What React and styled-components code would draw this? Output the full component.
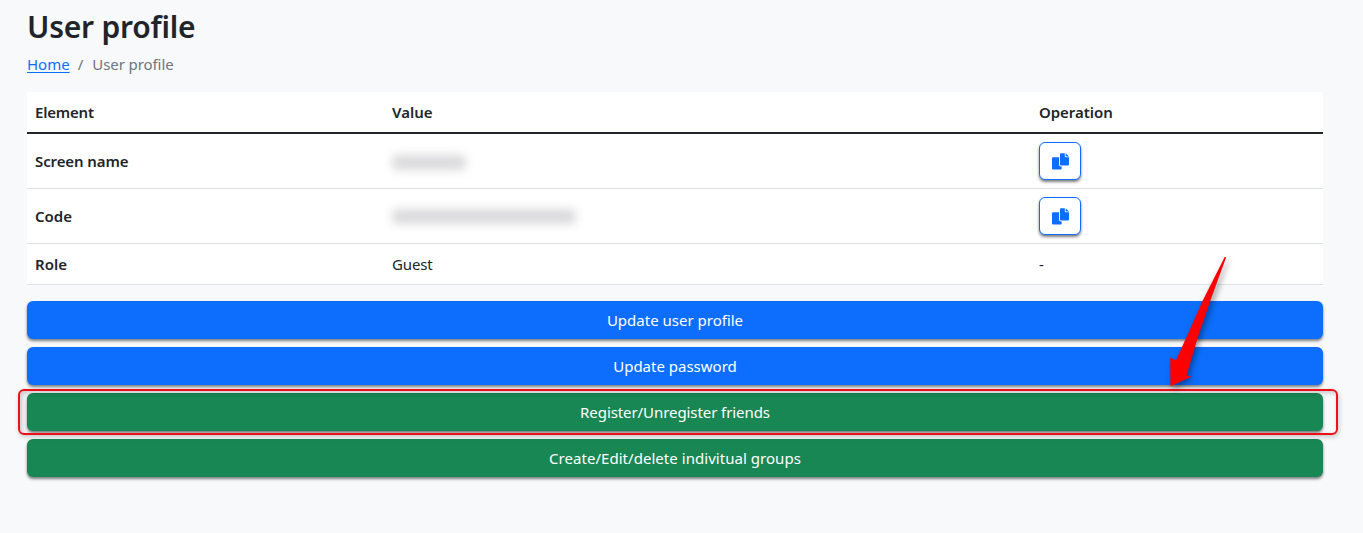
import React from "react";
import styled, { createGlobalStyle } from "styled-components";

const Global = createGlobalStyle`
  * { box-sizing: border-box; }
  body { margin: 0; background: #f8f9fb; color: #212529; font: 400 15px/24px "Noto Sans", "Open Sans", sans-serif; }
`;
const Page = styled.main`
  position: relative; height: 533px; padding: 8px 40px 0 27px; overflow: hidden;
`;
const Title = styled.h1`
  margin: 0 0 8px; font-size: 30px; line-height: 38px; font-weight: 600; letter-spacing: -0.22px; width: max-content;
`;
const Breadcrumb = styled.nav`
  display: flex; height: 24px; margin: -2px 0 16px; color: #6c757d;
`;
const Link = styled.a`
  color: #0d6efd; text-decoration: underline; text-underline-offset: 2px;
`;
const Separator = styled.span`
  padding: 0 9px 0 8px;
`;
const Table = styled.div`
  background: #fff; margin-bottom: 16px;
`;
const Row = styled.div`
  display: grid; grid-template-columns: 357px 647px 1fr; align-items: center;
  height: ${(p) => p.$h}px; border-bottom: ${(p) => (p.$head ? "2px solid #212529" : "1px solid #dee2e6")};
  font-weight: ${(p) => (p.$head ? 600 : 400)};
`;
const Cell = styled.div`
  padding: 0 8px; font-weight: ${(p) => (p.$strong ? 600 : "inherit")};
`;
const Text = styled.span`
  white-space: nowrap; letter-spacing: ${(p) => p.$ls || 0}px;
`;
const Redacted = styled.div`
  width: ${(p) => p.$w}px; height: 15px; margin-top: ${(p) => p.$drop || 0}px;
  border-radius: 5px; background: #dadadc; filter: blur(5px);
`;
const CopyButton = styled.button`
  display: flex; align-items: center; justify-content: center; width: 42px; height: 38px; padding: 0;
  border: 1px solid #0d6efd; border-radius: 6px; background: #fff; color: #0d6efd;
  box-shadow: 0 2px 3px rgba(0, 0, 0, 0.5);
`;
const Actions = styled.div`
  display: grid; gap: 8px;
`;
const Action = styled.button`
  height: 38px; border: 0; border-radius: 6px; color: #fff; font: inherit;
  background: ${(p) => (p.$green ? "#198754" : "#0d6efd")};
  box-shadow: 0 2px 3px rgba(0, 0, 0, 0.5);
`;
const Highlight = styled.div`
  position: absolute; left: 18px; top: 389px; width: 1320px; height: 46px;
  border: 2px solid #ee1018; border-radius: 6px;
  box-shadow: 1px 2px 5px rgba(0, 0, 0, 0.2), inset 2px 2px 5px rgba(0, 0, 0, 0.2);
`;
const Arrow = styled.svg`
  position: absolute; left: 1160px; top: 250px; filter: drop-shadow(2px 3px 3px rgba(0, 0, 0, 0.4));
`;

const CopyIcon = () => (
  <svg width="17" height="17" viewBox="0 0 17 17" fill="currentColor">
    <path d="M9 .3H12.800V3.200Q12.800 4.200 13.800 4.200H17V11.500Q17 12.500 16 12.500H9Q8 12.500 8 11.500V1.300Q8 .3 9 .3Z" />
    <path d="M13.700 .3L17 3.400H13.700Z" />
    <path d="M1 4.300H7.100V11.800Q7.100 13.400 8.700 13.400H9.700V15.400Q9.700 16.400 8.700 16.400H1Q0 16.400 0 15.400V5.300Q0 4.300 1 4.300Z" />
  </svg>
);

export default function App() {
  return (
    <>
      <Global />
      <Page>
        <Title>User profile</Title>
        <Breadcrumb>
          <Link><Text>Home</Text></Link>
          <Separator>/</Separator>
          <Text $ls={-0.08}>User profile</Text>
        </Breadcrumb>
        <Table>
          <Row $head $h={42}>
            <Cell><Text $ls={-0.2}>Element</Text></Cell>
            <Cell><Text>Value</Text></Cell>
            <Cell><Text $ls={-0.05}>Operation</Text></Cell>
          </Row>
          <Row $h={55}>
            <Cell $strong><Text $ls={-0.1}>Screen name</Text></Cell>
            <Cell><Redacted $w={74} $drop={3} /></Cell>
            <Cell><CopyButton aria-label="Copy screen name"><CopyIcon /></CopyButton></Cell>
          </Row>
          <Row $h={55}>
            <Cell $strong><Text>Code</Text></Cell>
            <Cell><Redacted $w={184} /></Cell>
            <Cell><CopyButton aria-label="Copy code"><CopyIcon /></CopyButton></Cell>
          </Row>
          <Row $h={41}>
            <Cell $strong><Text>Role</Text></Cell>
            <Cell><Text $ls={-0.15}>Guest</Text></Cell>
            <Cell><Text>-</Text></Cell>
          </Row>
        </Table>
        <Actions>
          <Action><Text>Update user profile</Text></Action>
          <Action><Text>Update password</Text></Action>
          <Action $green><Text $ls={-0.08}>Register/Unregister friends</Text></Action>
          <Action $green><Text $ls={0.04}>Create/Edit/delete indivitual groups</Text></Action>
        </Actions>
        <Highlight />
        <Arrow width="80" height="150" viewBox="0 0 80 150">
          <path d="M64.800 6.700L66.200 7.200L50.500 50L38 86.700L26.500 125.500L31.800 126.500L10.500 136.300L10.200 107.500L15.800 110.500L26.700 86.700L43 50Z" fill="#f00" />
        </Arrow>
      </Page>
    </>
  );
}
